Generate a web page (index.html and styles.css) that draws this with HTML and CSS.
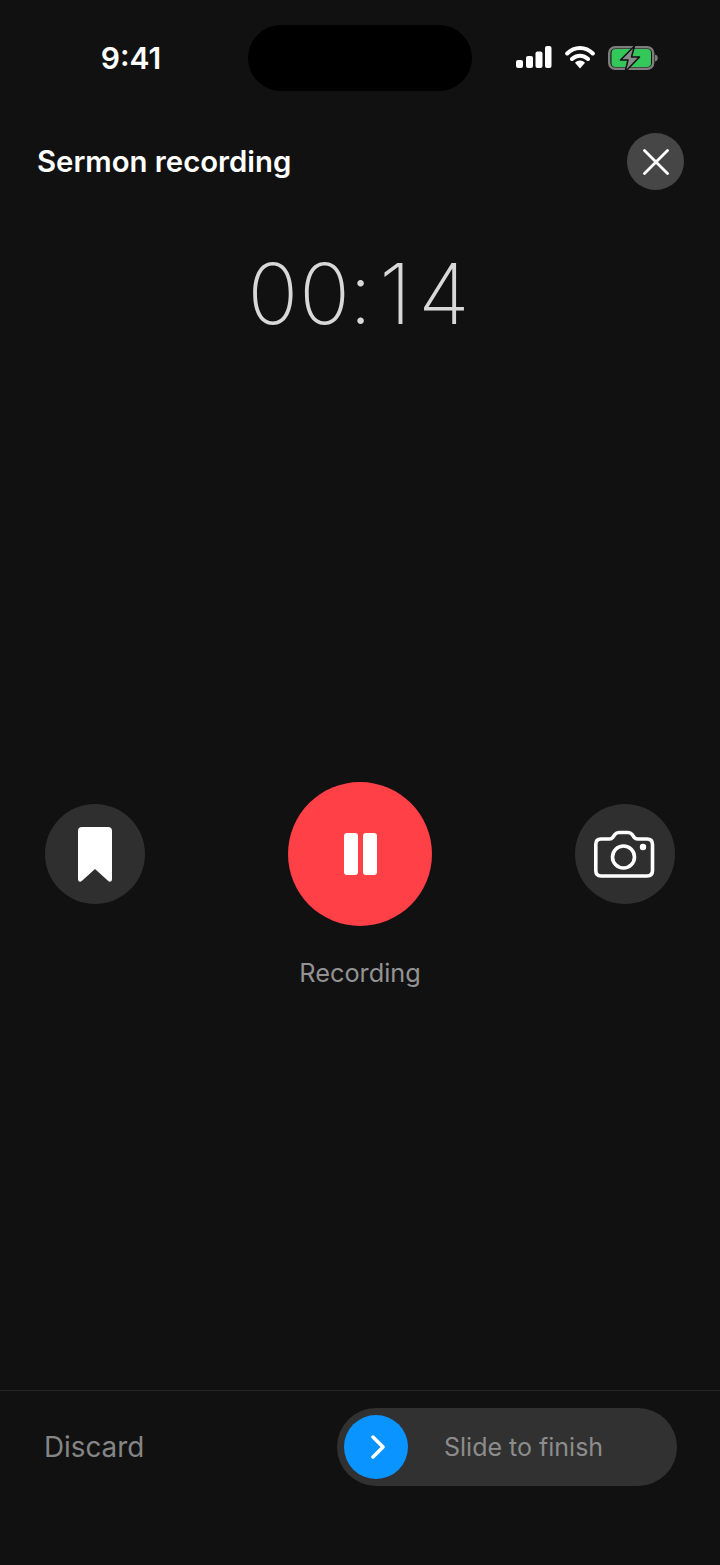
FILE: index.html
```html
<!DOCTYPE html>
<html lang="en">
<head>
    <meta charset="UTF-8">
    <meta name="viewport" content="width=device-width, initial-scale=1.0">
    <title>Sermon recording</title>
    <link rel="stylesheet" href="styles.css">
</head>
<body>
    <div class="screen">
        <div class="status-bar">
            <span class="clock">9:41</span>
            <div class="island"></div>
            <div class="status-icons">
                <svg width="36" height="22" viewBox="0 0 36 22">
                    <rect x="0" y="14" width="7" height="8" rx="2" fill="#fff"/>
                    <rect x="10" y="10" width="7" height="12" rx="2" fill="#fff"/>
                    <rect x="19.500" y="5.500" width="7" height="16.500" rx="2" fill="#fff"/>
                    <rect x="29" y="0" width="6.500" height="22" rx="2" fill="#fff"/>
                </svg>
                <svg class="wifi" width="30" height="24" viewBox="0 0 30 24">
                    <path d="M2.200 8.500C9.500 1 20.500 1 27.800 8.500M7 14C11.500 9.500 18.500 9.500 23 14" fill="none" stroke="#fff" stroke-width="4" stroke-linecap="round"/>
                    <path d="M10 17.800C13 14.800 17 14.800 20 17.800L15 23.500Z" fill="#fff"/>
                </svg>
                <svg class="battery" width="50" height="28" viewBox="0 0 50 28">
                    <rect x="1.200" y="2.200" width="44" height="21.600" rx="6" fill="none" stroke="#7d7d7d" stroke-width="2.400"/>
                    <rect x="3.500" y="4" width="39.500" height="18" rx="4" fill="#34c759"/>
                    <path d="M47 9.500C48.800 10 49.800 11.300 49.800 13C49.800 14.700 48.800 16 47 16.500Z" fill="#7d7d7d"/>
                    <path d="M26.500 1L12.500 15H20L17 27L31.500 12H23.500Z" fill="#8a8a8a" stroke="#111112" stroke-width="1.500" stroke-linejoin="round"/>
                </svg>
            </div>
        </div>

        <div class="header">
            <h1>Sermon recording</h1>
            <button class="close-btn">
                <svg width="26" height="26" viewBox="0 0 26 26">
                    <path d="M1.500 1.500L24.500 24.500M24.500 1.500L1.500 24.500" stroke="#fff" stroke-width="2.800" stroke-linecap="round"/>
                </svg>
            </button>
        </div>

        <div class="timer"><span class="timer-first">0</span><span class="timer-second">0</span><span class="timer-rest">:14</span></div>

        <div class="controls">
            <button class="side-btn">
                <svg width="34" height="55" viewBox="0 0 34 55">
                    <path d="M4 0H30A4 4 0 0 1 34 4V52C34 54.500 32 55.500 30 53.800L17 42L4 53.800C2 55.500 0 54.500 0 52V4A4 4 0 0 1 4 0Z" fill="#fff"/>
                </svg>
            </button>
            <div class="record-wrap">
                <button class="record-btn">
                    <span class="pause-bar"></span>
                    <span class="pause-bar"></span>
                </button>
                <span class="record-label">Recording</span>
            </div>
            <button class="side-btn">
                <svg width="62" height="48" viewBox="0 0 62 48">
                    <path d="M7 9H15.500C17 9 18 8.300 18.800 7.300L21 4.300C22 3 23 2.500 25 2.500H34C36 2.500 37 3 38 4.300L40.200 7.300C41 8.300 42 9 43.500 9H53C56.500 9 58.500 11 58.500 14.500V40.500C58.500 44 56.500 46 53 46H7C3.500 46 1.800 44 1.800 40.500V14.500C1.800 11 3.500 9 7 9Z" fill="none" stroke="#fff" stroke-width="3.600"/>
                    <circle cx="29.500" cy="27" r="11" fill="none" stroke="#fff" stroke-width="3.600"/>
                    <circle cx="49" cy="17" r="3.200" fill="#fff"/>
                </svg>
            </button>
        </div>

        <div class="footer">
            <span class="discard">Discard</span>
            <div class="slider">
                <div class="knob">
                    <svg class="chevron" width="14" height="24" viewBox="0 0 14 24">
                        <path d="M2 2L12 12L2 22" fill="none" stroke="#fff" stroke-width="3.500" stroke-linecap="round" stroke-linejoin="round"/>
                    </svg>
                </div>
                <span class="slider-text">Slide to finish</span>
            </div>
        </div>
    </div>
</body>
</html>
```

FILE: styles.css
```css
* {
    box-sizing: border-box;
}

body {
    margin: 0;
    background-color: #111112;
    font-family: Inter, "Noto Sans", sans-serif;
    color: #fff;
}

button {
    border: none;
    padding: 0;
    cursor: pointer;
}

.screen {
    height: 1565px;
    display: flex;
    flex-direction: column;
}

.status-bar {
    display: grid;
    grid-template-columns: 248px 224px 248px;
    align-items: center;
    height: 66px;
    margin-top: 25px;
}

.clock {
    font-size: 30px;
    font-weight: 600;
    text-align: center;
    padding-left: 14px;
}

.island {
    height: 66px;
    background-color: #000;
    border-radius: 33px;
}

.status-icons {
    display: flex;
    align-items: center;
    gap: 13px;
    padding-left: 44px;
    margin-top: -3px;
}

.battery {
    margin-top: 5px;
}

.header {
    display: flex;
    justify-content: space-between;
    align-items: center;
    margin-top: 42px;
    padding: 0 36px 0 37px;
}

h1 {
    margin: 0;
    font-size: 29.300px;
    font-weight: 600;
}

.close-btn {
    width: 57px;
    height: 57px;
    border-radius: 50%;
    background-color: #464646;
    display: flex;
    align-items: center;
    justify-content: center;
}

.timer {
    margin-top: 50px;
    padding-left: 4px;
    text-align: center;
    font-size: 84px;
    font-weight: 200;
    line-height: 108px;
    color: #d8d8d8;
}

.timer-first {
    letter-spacing: 1px;
}

.timer-second {
    letter-spacing: -1px;
}

.timer-rest {
    letter-spacing: 7px;
}

.controls {
    display: flex;
    justify-content: space-between;
    align-items: flex-start;
    margin-top: 434px;
    padding: 0 45px;
}

.side-btn {
    width: 100px;
    height: 100px;
    margin-top: 22px;
    border-radius: 50%;
    background-color: #2f2f2f;
    display: flex;
    align-items: center;
    justify-content: center;
}

.record-wrap {
    display: flex;
    flex-direction: column;
    align-items: center;
}

.record-btn {
    width: 144px;
    height: 144px;
    border-radius: 50%;
    background-color: #ff4046;
    display: flex;
    align-items: center;
    justify-content: center;
    gap: 5px;
}

.pause-bar {
    width: 14px;
    height: 42px;
    border-radius: 3px;
    background-color: #fff;
}

.record-label {
    margin-top: 32px;
    font-size: 25.300px;
    line-height: 30px;
    color: #939393;
}

.footer {
    margin-top: auto;
    height: 175px;
    border-top: 1px solid #262626;
    display: flex;
    justify-content: space-between;
    align-items: flex-start;
    padding: 17px 43px 0 44px;
}

.discard {
    margin-top: 22px;
    font-size: 27.800px;
    line-height: 34px;
    color: #858585;
}

.slider {
    width: 340px;
    height: 78px;
    border-radius: 39px;
    background-color: #313131;
    display: flex;
    align-items: center;
    padding-left: 7px;
}

.knob {
    width: 64px;
    height: 64px;
    border-radius: 50%;
    background-color: #0a94ff;
    display: flex;
    align-items: center;
    justify-content: center;
}

.chevron {
    margin-left: 3px;
}

.slider-text {
    margin-left: 36px;
    font-size: 25px;
    color: #8c8c8c;
}
```
